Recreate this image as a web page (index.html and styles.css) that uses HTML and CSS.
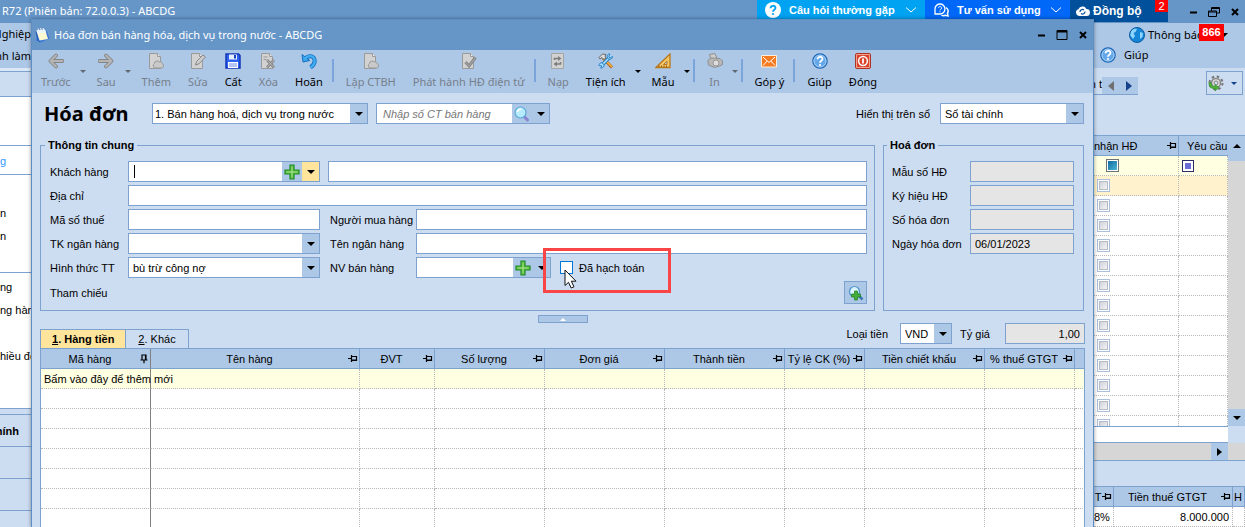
FILE: index.html
```html
<!DOCTYPE html>
<html lang="vi">
<head>
    <meta charset="UTF-8">
    <meta name="viewport" content="width=device-width, initial-scale=1.0">
    <title>Hóa đơn bán hàng hóa, dịch vụ trong nước - ABCDG</title>
    <link rel="stylesheet" href="styles.css">
</head>
<body>
    <!-- Shared icons -->
    <svg class="symbols" aria-hidden="true">
        <symbol id="arrow-left" viewBox="0 0 16 16"><path d="M8 2.500 2.500 8 8 13.500M3 8H14.500" fill="none" stroke="#858585" stroke-width="3.800" stroke-linecap="round" stroke-linejoin="round"/><path d="M8 2.500 2.500 8 8 13.500M3 8H14.500" fill="none" stroke="#b5b5b5" stroke-width="2" stroke-linecap="round" stroke-linejoin="round"/></symbol>
        <symbol id="page" viewBox="0 0 16 16"><path d="M1.500 .5h8l3 3v12h-11z" fill="#d2d2d2" stroke="#9a9a9a"/><path d="M9.500.5v3h3" fill="#eee" stroke="#9a9a9a"/></symbol>
        <symbol id="page-add" viewBox="0 0 16 16"><use href="#page"/><path d="M7 15a2.500 2.500 0 0 1-.5-4.500 2.500 2.500 0 0 1 4.500-1.500 2.500 2.500 0 0 1 3.500 2 2.200 2.200 0 0 1-.5 4z" fill="#c9c9c9" stroke="#999"/></symbol>
        <symbol id="page-edit" viewBox="0 0 16 16"><use href="#page"/><path d="m5.500 12 1-3.500L13 2l2.500 2L9 10.800z" fill="#ccc" stroke="#888"/></symbol>
        <symbol id="page-delete" viewBox="0 0 16 16"><use href="#page"/><path d="M3.500 4h4M3.500 6.500h3" stroke="#999"/><path d="m7 7 7 7.500m0-7.500-7 7.500" stroke="#858585" stroke-width="2.600"/><path d="m7 7 7 7.500m0-7.500-7 7.500" stroke="#bbb"/></symbol>
        <symbol id="page-check" viewBox="0 0 16 16"><use href="#page"/><path d="m4.500 9 3.500 4 6.500-8.500" fill="none" stroke="#888" stroke-width="3"/><path d="m4.500 9 3.500 4 6.500-8.500" fill="none" stroke="#aaa"/></symbol>
        <symbol id="save" viewBox="0 0 16 16"><path d="M1 1h12.500L15 2.500V15H1z" fill="#2e63ef" stroke="#1338b8" stroke-width="1.500"/><path d="M4 1.500h8v5H4z" fill="#e8efff"/><path d="M9 2h2v3.500H9z" fill="#1b43c8"/><path d="M3 9h10v6H3z" fill="#fff"/><path d="M4 11h8m-8 2h8" stroke="#6b8be8"/></symbol>
        <symbol id="undo" viewBox="0 0 16 16"><path d="M3.500 6.500C6 2.500 11.500 2 13.200 5.700 14.500 9 13 12 9.500 14.500" fill="none" stroke="#1672c4" stroke-width="4"/><path d="M1 1.500 2 9l6.800-1.500z" fill="#3aa4ee" stroke="#1672c4"/><path d="M3.500 6.500C6 2.500 11.500 2 13.200 5.700 14.500 9 13 12 9.500 14.500" fill="none" stroke="#43aef2" stroke-width="2.200"/></symbol>
        <symbol id="reload" viewBox="0 0 16 16"><path d="M1.500.5h12v15h-12z" fill="#d2d2d2" stroke="#a5a5a5"/><path d="M4.500 7V5.500h4M10.500 9v2H6.500" fill="none" stroke="#7d7d7d" stroke-width="1.600"/><path d="M8 3v5L11.500 5.500zM7 8.500v5L3.500 11z" fill="#7d7d7d"/></symbol>
        <symbol id="tools" viewBox="0 0 16 16"><path d="m5 5 9 9.500" stroke="#a5641b" stroke-width="3"/><path d="m6 6 8 8" stroke="#ffb43c" stroke-width="1.500"/><path d="M1 4.500 4.500 1l3.500.5-1 1.500 1 2-2 1.500-2-2L2 6z" fill="#ddd" stroke="#666"/><path d="m3 13 9-9" stroke="#2480c6" stroke-width="3.200"/><path d="m2 14 11-11" stroke="#b4e3ff" stroke-width="1.500"/><path d="M14.500 3.500 12 5l-1.300-1.500L12 1C9.500.7 8.500 3 9.500 5.200c2 1.800 5.500.8 5-1.700z" fill="#a8dcff" stroke="#2480c6"/><path d="M1 12.500C1 9.700 4 9 5.500 11c1.500 2-.5 4.500-3 4l1.500-2z" fill="#a8dcff" stroke="#2480c6"/></symbol>
        <symbol id="ruler" viewBox="0 0 16 16"><path d="M15 1v13.500H1z" fill="#f5c667" stroke="#b97818" stroke-width="1.300"/><path d="M12 8v3.500H8.500z" fill="#adc7e6" stroke="#b97818"/><path d="M4 14v-1.500m2.500 1.500v-1.500m2.500 1.500v-1.500m2.500 1.500v-1.500" stroke="#8d5710"/></symbol>
        <symbol id="printer" viewBox="0 0 16 16"><path d="M2.500 1.500 8 .5l2 5-6 2z" fill="#ccc" stroke="#8f8f8f"/><path d="M.8 7.500 4 5l9 .5 2.500 2.500v3.500l-3 1.500-5 1.500-6-2.500z" fill="#b7b7b7" stroke="#8f8f8f"/><circle cx="9" cy="10" r="3" fill="#ddd" stroke="#999"/></symbol>
        <symbol id="mail" viewBox="0 0 16 16"><path d="M.5 2.500h15v11.500H.5z" fill="#f47b20" stroke="#fff0dc"/><path d="m2 4 6 5.500L14 4M2 12.500l4.200-4.500M14 12.500 9.800 8" fill="none" stroke="#fff"/></symbol>
        <symbol id="help" viewBox="0 0 16 16"><circle cx="8" cy="8" r="7.200" fill="#65a8ea" stroke="#1d65b4" stroke-width="1.200"/><circle cx="8" cy="8" r="6" fill="none" stroke="#a8d0f6"/><path d="M5.500 6.300c.1-3.400 5-3.200 5-.4C10.500 7.800 8 7.700 8 9.700" fill="none" stroke="#fff" stroke-width="1.800"/><circle cx="8" cy="12" r="1.100" fill="#fff"/></symbol>
        <symbol id="power" viewBox="0 0 16 16"><rect x=".6" y=".6" width="14.800" height="14.800" rx="1" fill="#d9452a" stroke="#a92a18"/><path d="M1.500 1.500h13v13h-13z" fill="none" stroke="#f3a28f"/><circle cx="8" cy="8" r="4.400" fill="none" stroke="#fff" stroke-width="1.500"/><path d="M8 5.500v5" stroke="#fff" stroke-width="1.800"/></symbol>
        <symbol id="plus" viewBox="0 0 16 16"><path d="M6 1h4v5h5v4h-5v5H6v-5H1V6h5z" fill="#5cbd3c" stroke="#218a2a" stroke-width="1.200"/><path d="M8 2.500v11M2.500 8h11" stroke="#a8e58c"/></symbol>
        <symbol id="magnifier" viewBox="0 0 16 16"><path d="m10.500 11 3 3" stroke="#8a83cf" stroke-width="3" stroke-linecap="round"/><circle cx="6.500" cy="6.500" r="5.500" fill="#b5ebfc" stroke="#5aa7d8" stroke-width="1.200"/><path d="M3.500 6c.3-2 2-3 3.800-2.800" fill="none" stroke="#fff" stroke-width="1.500"/></symbol>
        <symbol id="pin" viewBox="0 0 10 9"><path d="M0 4.500h3M3.500 1v7M3.500 2.500h5v4h-5M4 6h5" fill="none" stroke="#000" stroke-width="1.200"/></symbol>
        <symbol id="chevron" viewBox="0 0 12 6"><path d="m1 .5 5 4.500 5-4.500" fill="none" stroke="#fff"/></symbol>
    </svg>

    <div class="app">
        <header class="app-title">
            <span class="app-name">R72 (Phiên bản: 72.0.0.3) - ABCDG</span>
            <nav class="services">
                <button type="button" class="service faq">
                    <svg width="16" height="16" viewBox="0 0 16 16"><circle cx="8" cy="8" r="8" fill="#fff"/><path d="M5.500 6.300c.1-3.400 5-3.200 5-.4C10.500 7.800 8 7.700 8 9.700" fill="none" stroke="#00a2f2" stroke-width="1.800"/><circle cx="8" cy="12" r="1.100" fill="#00a2f2"/></svg>
                    <span>Câu hỏi thường gặp</span>
                    <svg width="12" height="6"><use href="#chevron"/></svg>
                </button>
                <button type="button" class="service advice">
                    <svg width="16" height="14" viewBox="0 0 16 14"><path d="M2 11V6.500a5 5 0 1 1 5 4.500z" fill="none" stroke="#fff" stroke-width="1.300"/><path d="M5.500 5c0-2 3.200-2 3.200 0C8.700 6.200 7 6.200 7 7.300M7 8.300v1" fill="none" stroke="#fff"/><path d="M13 4.500c3 2 2.200 4.500 1.500 5.500l.5 3-2.500-.7c-1.500.6-3 .5-4-.3" fill="none" stroke="#fff" stroke-width="1.500"/></svg>
                    <span>Tư vấn sử dụng</span>
                    <svg width="12" height="6"><use href="#chevron"/></svg>
                </button>
                <button type="button" class="service sync">
                    <svg width="15" height="12" viewBox="0 0 15 12"><path d="M4 11a3.500 3.500 0 0 1-.6-6.800 4.300 4.300 0 0 1 8-.2A3.500 3.500 0 0 1 11.500 11z" fill="#fff"/><path d="M5 7a2.500 2.500 0 0 1 4-2M10 6.500a2.500 2.500 0 0 1-4 2" fill="none" stroke="#00509b" stroke-width="1.200"/></svg>
                    <span>Đồng bộ</span>
                    <span class="badge sync-badge">2</span>
                </button>
            </nav>
            <div class="window-buttons">
                <button type="button" aria-label="Thu nhỏ"><svg width="12" height="12" viewBox="0 0 12 12"><path d="M3 6.500h7" stroke="#000" stroke-width="2"/></svg></button>
                <button type="button" aria-label="Khôi phục"><svg width="12" height="12" viewBox="0 0 12 12"><path d="M3.500 5V1.500h8V7H8.500M.5 5h8v5.500h-8zM.5 6h8M3.500 2.500h8" fill="none" stroke="#000"/></svg></button>
                <button type="button" aria-label="Đóng"><svg width="12" height="12" viewBox="0 0 12 12"><path d="m3 3 6 6m0-6-6 6" stroke="#000" stroke-width="2"/></svg></button>
            </div>
        </header>

        <div class="menubar">
            <div class="menu-left">
                <span>Nghiệp</span>
                <span>nh làm</span>
            </div>
            <div class="menu-right">
                <div class="notice">
                    <svg width="16" height="16" viewBox="0 0 16 16"><circle cx="8" cy="8" r="7.500" fill="#1484d6"/><path d="M2.500 3.500C5 1 7.500 1 8 2L6.500 5 4.500 6 6 9l-2 3-3-4zM11 5l3 1-.5 4-2.500 2z" fill="#8bd5ff"/><circle cx="8" cy="8" r="7.500" fill="none" stroke="#0c5da5"/></svg>
                    <span>Thông báo</span>
                    <i class="triangle"></i>
                    <span class="badge notice-badge">866</span>
                </div>
                <div class="help-link">
                    <svg width="16" height="16"><use href="#help"/></svg>
                    <span>Giúp</span>
                </div>
            </div>
        </div>

        <div class="workspace">
            <aside class="side">
                <div class="side-strip"></div>
                <div class="side-block side-top"></div>
                <div class="side-block side-active"><span>g</span></div>
                <div class="side-block side-group"><span>n</span><span>n</span></div>
                <div class="side-block side-list"><span>ng</span><span>ng hàng</span><span></span><span>hiều đối</span></div>
                <div class="side-gap"></div>
                <div class="side-nav side-nav-active">chính</div>
                <div class="side-nav"></div>
                <div class="side-nav"></div>
                <div class="side-nav"></div>
            </aside>

            <section class="listing">
                <div class="listing-tabs">
                    <div class="tab-scroll">
                        <span>n t</span>
                        <button type="button" aria-label="Trước"><svg width="6" height="10"><path d="M6 0v10L0 5z" fill="#707070"/></svg></button>
                        <button type="button" aria-label="Sau"><svg width="6" height="10"><path d="M0 0v10l6-5z" fill="#15428b"/></svg></button>
                    </div>
                    <button type="button" class="settings" aria-label="Tùy chọn">
                        <svg width="16" height="16" viewBox="0 0 16 16"><circle cx="8" cy="8" r="6.500" fill="none" stroke="#777" stroke-width="2" stroke-dasharray="2.500 2.600"/><circle cx="8" cy="8" r="4.500" fill="#ddd" stroke="#888" stroke-width="1.500"/><circle cx="8" cy="8" r="2" fill="#cbdbf0" stroke="#888"/><path d="M1 7.500c-.5 4 2.500 6.500 6 6V16l4-3.500-4-3v2c-2.500 0-4-1.500-4-4z" fill="#4cb23b" stroke="#2d8a24" stroke-width=".6"/></svg>
                        <i class="triangle blue"></i>
                    </button>
                </div>

                <div class="list-grid">
                    <div class="list-body">
                        <table class="grid">
                            <thead>
                                <tr>
                                    <th class="col-confirm"><div class="head"><span>nhận HĐ</span><svg width="10" height="9"><use href="#pin"/></svg></div></th>
                                    <th class="col-request"><div class="head"><span>Yêu cầu</span></div></th>
                                </tr>
                            </thead>
                            <tbody>
                                <tr class="row-filter"><td><i class="mark teal"></i></td><td><i class="mark violet"></i></td></tr>
                                <tr class="row-current"><td><input type="checkbox" class="tick" aria-label="Dòng 1"></td><td></td></tr>
                                <tr><td><input type="checkbox" class="tick" aria-label="Dòng 2"></td><td></td></tr>
                                <tr><td><input type="checkbox" class="tick" aria-label="Dòng 3"></td><td></td></tr>
                                <tr><td><input type="checkbox" class="tick" aria-label="Dòng 4"></td><td></td></tr>
                                <tr><td><input type="checkbox" class="tick" aria-label="Dòng 5"></td><td></td></tr>
                                <tr><td><input type="checkbox" class="tick" aria-label="Dòng 6"></td><td></td></tr>
                                <tr><td><input type="checkbox" class="tick" aria-label="Dòng 7"></td><td></td></tr>
                                <tr><td><input type="checkbox" class="tick" aria-label="Dòng 8"></td><td></td></tr>
                                <tr><td><input type="checkbox" class="tick" aria-label="Dòng 9"></td><td></td></tr>
                                <tr><td><input type="checkbox" class="tick" aria-label="Dòng 10"></td><td></td></tr>
                                <tr><td><input type="checkbox" class="tick" aria-label="Dòng 11"></td><td></td></tr>
                                <tr><td><input type="checkbox" class="tick" aria-label="Dòng 12"></td><td></td></tr>
                                <tr><td><input type="checkbox" class="tick" aria-label="Dòng 13"></td><td></td></tr>
                            </tbody>
                        </table>
                    </div>
                    <div class="scroll-y">
                        <button type="button" class="scroll-up" aria-label="Cuộn lên"><i class="triangle up"></i></button>
                        <button type="button" class="scroll-down" aria-label="Cuộn xuống"><i class="triangle"></i></button>
                    </div>
                </div>
                <div class="list-foot"></div>
                <div class="scroll-x">
                    <button type="button" aria-label="Cuộn phải"><svg width="5" height="8"><path d="M0 0v8l5-4z"/></svg></button>
                </div>

                <table class="grid detail-grid">
                    <thead>
                        <tr>
                            <th class="col-rate"><div class="head"><span>T</span><svg width="10" height="9"><use href="#pin"/></svg></div></th>
                            <th><div class="head"><span>Tiền thuế GTGT</span><svg width="10" height="9"><use href="#pin"/></svg></div></th>
                            <th class="col-next"><div class="head"><span>H</span></div></th>
                        </tr>
                    </thead>
                    <tbody>
                        <tr><td>8%</td><td class="number">8.000.000</td><td></td></tr>
                    </tbody>
                </table>
            </section>
        </div>
    </div>

    <div class="dialog" role="dialog" aria-labelledby="dialogTitle">
        <header class="dialog-title">
            <svg width="15" height="15" viewBox="0 0 15 15"><path d="m3 3 8-1.500 3.500 9-9 4-4.500-2z" fill="#3a78d8"/><path d="m1.500 2.500 8.500-1 3 9.500-8.500 1.500z" fill="#fff9d0"/><path d="m1.500 2.500 8.500-1 1 3-8.500 1.200z" fill="#e9f6ff"/><path d="M1 3.500 3 12l2 2" fill="none" stroke="#2455b5"/><path d="M3 .5 4 3m1.500-3 1 3M8 0l1 2.500" stroke="#f4f4f4"/></svg>
            <span id="dialogTitle">Hóa đơn bán hàng hóa, dịch vụ trong nước - ABCDG</span>
            <div class="window-buttons">
                <button type="button" aria-label="Thu nhỏ"><svg width="12" height="12" viewBox="0 0 12 12"><path d="M3 6.500h7" stroke="#000" stroke-width="2"/></svg></button>
                <button type="button" aria-label="Phóng to"><svg width="12" height="12" viewBox="0 0 12 12"><path d="M1 1.500h10v9H1z" fill="none" stroke="#000"/><path d="M1 2.500h10" stroke="#000" stroke-width="2"/></svg></button>
                <button type="button" aria-label="Đóng"><svg width="12" height="12" viewBox="0 0 12 12"><path d="m3 3 6 6m0-6-6 6" stroke="#000" stroke-width="2"/></svg></button>
            </div>
        </header>

        <div class="toolbar">
            <button type="button" class="tool" disabled><svg width="16" height="16"><use href="#arrow-left"/></svg>Trước</button>
            <i class="triangle tool-drop off"></i>
            <button type="button" class="tool" disabled><svg class="flip" width="16" height="16"><use href="#arrow-left"/></svg>Sau</button>
            <i class="triangle tool-drop off"></i>
            <button type="button" class="tool" disabled><svg width="16" height="16"><use href="#page-add"/></svg>Thêm</button>
            <button type="button" class="tool" disabled><svg width="16" height="16"><use href="#page-edit"/></svg>Sửa</button>
            <button type="button" class="tool"><svg width="16" height="16"><use href="#save"/></svg>Cất</button>
            <button type="button" class="tool" disabled><svg width="16" height="16"><use href="#page-delete"/></svg>Xóa</button>
            <button type="button" class="tool"><svg width="16" height="16"><use href="#undo"/></svg>Hoãn</button>
            <i class="divider"></i>
            <button type="button" class="tool" disabled><svg width="16" height="16"><use href="#page-add"/></svg>Lập CTBH</button>
            <button type="button" class="tool" disabled><svg width="16" height="16"><use href="#page-check"/></svg>Phát hành HĐ điện tử</button>
            <i class="divider"></i>
            <button type="button" class="tool" disabled><svg width="16" height="16"><use href="#reload"/></svg>Nạp</button>
            <button type="button" class="tool"><svg width="16" height="16"><use href="#tools"/></svg>Tiện ích</button>
            <i class="triangle tool-drop"></i>
            <button type="button" class="tool"><svg width="16" height="16"><use href="#ruler"/></svg>Mẫu</button>
            <i class="triangle tool-drop"></i>
            <i class="divider"></i>
            <button type="button" class="tool" disabled><svg width="16" height="16"><use href="#printer"/></svg>In</button>
            <i class="triangle tool-drop off"></i>
            <i class="divider"></i>
            <button type="button" class="tool"><svg width="16" height="16"><use href="#mail"/></svg>Góp ý</button>
            <i class="divider"></i>
            <button type="button" class="tool"><svg width="16" height="16"><use href="#help"/></svg>Giúp</button>
            <button type="button" class="tool"><svg width="16" height="16"><use href="#power"/></svg>Đóng</button>
        </div>

        <form class="invoice">
            <div class="invoice-top">
                <h1>Hóa đơn</h1>
                <div class="combo combo-type">
                    <select aria-label="Loại hóa đơn"><option>1. Bán hàng hoá, dịch vụ trong nước</option></select>
                    <span class="drop"><i class="triangle"></i></span>
                </div>
                <div class="combo combo-search">
                    <input type="text" placeholder="Nhập số CT bán hàng" aria-label="Số chứng từ bán hàng">
                    <button type="button" class="combo-button" aria-label="Tìm"><svg width="16" height="16"><use href="#magnifier"/></svg></button>
                    <span class="drop"><i class="triangle"></i></span>
                </div>
                <label for="ledger" class="ledger-label">Hiển thị trên sổ</label>
                <div class="combo combo-ledger">
                    <select id="ledger"><option>Sổ tài chính</option></select>
                    <span class="drop"><i class="triangle"></i></span>
                </div>
            </div>

            <div class="groups">
                <fieldset class="group general">
                    <legend>Thông tin chung</legend>
                    <div class="general-fields">
                        <label for="customer">Khách hàng</label>
                        <div class="combo">
                            <input type="text" id="customer">
                            <span class="caret"></span>
                            <button type="button" class="combo-button" aria-label="Thêm khách hàng"><svg width="16" height="16"><use href="#plus"/></svg></button>
                            <span class="drop hot"><i class="triangle"></i></span>
                        </div>
                        <input type="text" class="customer-name" aria-label="Tên khách hàng">

                        <label for="address">Địa chỉ</label>
                        <input type="text" id="address" class="wide">

                        <label for="taxCode">Mã số thuế</label>
                        <input type="text" id="taxCode">
                        <label for="buyer" class="second">Người mua hàng</label>
                        <input type="text" id="buyer">

                        <label for="bankAccount">TK ngân hàng</label>
                        <div class="combo">
                            <select id="bankAccount"><option></option></select>
                            <span class="drop"><i class="triangle"></i></span>
                        </div>
                        <label for="bankName" class="second">Tên ngân hàng</label>
                        <input type="text" id="bankName">

                        <label for="payment">Hình thức TT</label>
                        <div class="combo">
                            <select id="payment"><option>bù trừ công nợ</option></select>
                            <span class="drop"><i class="triangle"></i></span>
                        </div>
                        <label for="seller" class="second">NV bán hàng</label>
                        <div class="seller-row">
                            <div class="combo combo-seller">
                                <input type="text" id="seller">
                                <button type="button" class="combo-button" aria-label="Thêm nhân viên"><svg width="16" height="16"><use href="#plus"/></svg></button>
                                <span class="drop"><i class="triangle"></i></span>
                            </div>
                            <div class="posted">
                                <input type="checkbox" id="posted">
                                <label for="posted">Đã hạch toán</label>
                                <span class="highlight"></span>
                                <svg class="pointer" width="14" height="20" viewBox="0 0 14 20"><path d="M1 1v15.500l3.500-3.200 2.700 5.700 2.800-1.200-2.700-5.600H12z" fill="#fff" stroke="#111"/></svg>
                            </div>
                        </div>
                    </div>
                    <div class="reference">
                        <span>Tham chiếu</span>
                        <button type="button" aria-label="Chọn chứng từ tham chiếu"><svg width="16" height="16" viewBox="0 0 16 16"><path d="m10 10 4.500 4.500" stroke="#3975b0" stroke-width="2.500"/><circle cx="6.500" cy="6.500" r="5" fill="#d9f4ff" stroke="#4b91c8" stroke-width="1.200"/><path d="M6.500 6h3v3h3v3h-3v3h-3v-3h-3V9h3z" fill="#43ae3a" stroke="#207b20" stroke-width=".7"/></svg></button>
                    </div>
                </fieldset>

                <fieldset class="group document">
                    <legend>Hoá đơn</legend>
                    <div class="document-fields">
                        <label for="template">Mẫu số HĐ</label>
                        <input type="text" id="template" readonly>
                        <label for="serial">Ký hiệu HĐ</label>
                        <input type="text" id="serial" readonly>
                        <label for="number">Số hóa đơn</label>
                        <input type="text" id="number" readonly>
                        <label for="date">Ngày hóa đơn</label>
                        <input type="text" id="date" value="06/01/2023" readonly>
                    </div>
                </fieldset>
            </div>

            <button type="button" class="collapse" aria-label="Thu gọn"><i class="triangle up white"></i></button>

            <div class="tab-row">
                <div class="tabs">
                    <button type="button" class="tab active"><u>1</u>. Hàng tiền</button>
                    <button type="button" class="tab"><u>2</u>. Khác</button>
                </div>
                <div class="currency">
                    <label for="currency">Loại tiền</label>
                    <div class="combo combo-currency">
                        <select id="currency"><option>VND</option></select>
                        <span class="drop"><i class="triangle"></i></span>
                    </div>
                    <label for="rate">Tỷ giá</label>
                    <input type="text" id="rate" value="1,00" readonly>
                </div>
            </div>

            <table class="grid items">
                <colgroup>
                    <col class="w-code"><col><col class="w-unit"><col class="w-qty"><col class="w-money"><col class="w-money"><col class="w-ratio"><col class="w-money"><col class="w-vat"><col class="w-rest">
                </colgroup>
                <thead>
                    <tr>
                        <th><div class="head"><span>Mã hàng</span><svg class="down" width="10" height="9"><use href="#pin"/></svg></div></th>
                        <th><div class="head"><span>Tên hàng</span><svg width="10" height="9"><use href="#pin"/></svg></div></th>
                        <th><div class="head"><span>ĐVT</span><svg width="10" height="9"><use href="#pin"/></svg></div></th>
                        <th><div class="head"><span>Số lượng</span><svg width="10" height="9"><use href="#pin"/></svg></div></th>
                        <th><div class="head"><span>Đơn giá</span><svg width="10" height="9"><use href="#pin"/></svg></div></th>
                        <th><div class="head"><span>Thành tiền</span><svg width="10" height="9"><use href="#pin"/></svg></div></th>
                        <th><div class="head"><span>Tỷ lệ CK (%)</span><svg width="10" height="9"><use href="#pin"/></svg></div></th>
                        <th><div class="head"><span>Tiền chiết khấu</span><svg width="10" height="9"><use href="#pin"/></svg></div></th>
                        <th><div class="head"><span>% thuế GTGT</span><svg width="10" height="9"><use href="#pin"/></svg></div></th>
                        <th></th>
                    </tr>
                </thead>
                <tbody>
                    <tr class="row-filter"><td>Bấm vào đây để thêm mới</td><td></td><td></td><td></td><td></td><td></td><td></td><td></td><td></td><td></td></tr>
                    <tr><td></td><td></td><td></td><td></td><td></td><td></td><td></td><td></td><td></td><td></td></tr>
                    <tr><td></td><td></td><td></td><td></td><td></td><td></td><td></td><td></td><td></td><td></td></tr>
                    <tr><td></td><td></td><td></td><td></td><td></td><td></td><td></td><td></td><td></td><td></td></tr>
                    <tr><td></td><td></td><td></td><td></td><td></td><td></td><td></td><td></td><td></td><td></td></tr>
                    <tr><td></td><td></td><td></td><td></td><td></td><td></td><td></td><td></td><td></td><td></td></tr>
                    <tr><td></td><td></td><td></td><td></td><td></td><td></td><td></td><td></td><td></td><td></td></tr>
                    <tr><td></td><td></td><td></td><td></td><td></td><td></td><td></td><td></td><td></td><td></td></tr>
                </tbody>
            </table>
        </form>
    </div>
</body>
</html>
```
FILE: styles.css
```css
* {
    margin: 0;
    padding: 0;
    box-sizing: border-box;
}

:root {
    --title: #6696c8;
    --bar: #adc7e6;
    --panel: #ccdcf1;
    --line: #7da2cf;
    --dots: #b8b8b8;
    --ui: "Noto Sans", "Open Sans", sans-serif;
}

body {
    height: 100vh;
    overflow: hidden;
    position: relative;
    background: var(--panel);
    color: #000;
    font: 11px/14px "Liberation Sans", Arial, sans-serif;
}

svg {
    display: block;
    flex: none;
}

.symbols {
    position: absolute;
    width: 0;
    height: 0;
}

button, input, select {
    font: inherit;
    color: inherit;
    border: none;
    border-radius: 0;
    background: none;
    outline: none;
}

.triangle {
    flex: none;
    width: 0;
    height: 0;
    border: 4px solid transparent;
    border-top-color: #000;
    border-bottom: none;
}

.triangle.up {
    border-top: none;
    border-bottom: 4px solid #000;
}

.triangle.white {
    border-bottom-color: #fff;
    border-width: 0 3px 3px;
}

.triangle.blue {
    border-top-color: #15428b;
    border-width: 3px 3px 0;
}

.badge {
    position: absolute;
    background: #f00;
    color: #fff;
    text-align: center;
}

/* Main window behind the dialog */
.app {
    height: 100%;
    display: flex;
    flex-direction: column;
}

.app-title {
    height: 23px;
    display: flex;
    background: var(--title);
    flex: none;
}

.app-name {
    flex: 1;
    padding: 4px 2px;
    font-family: var(--ui);
    color: #fff;
}

.services {
    display: flex;
    align-items: flex-start;
}

.service {
    height: 19px;
    display: flex;
    align-items: center;
    gap: 8px;
    padding: 0 8px;
    color: #fff;
    font-weight: bold;
    white-space: nowrap;
    position: relative;
}

.service span {
    flex: 1;
    text-align: left;
}

.faq {
    width: 168px;
    background: #00a2f2;
}

.advice {
    width: 145px;
    background: #0068f8;
}

.sync {
    width: 98px;
    height: 22px;
    gap: 3px;
    padding: 0 5px;
    background: #00509b;
    font-size: 12px;
}

.service .sync-badge {
    top: 0;
    right: 0;
    width: 13px;
    height: 12px;
    line-height: 12px;
    font-size: 11px;
    font-weight: normal;
    text-align: center;
}

.window-buttons {
    display: flex;
    align-items: center;
    gap: 9px;
    padding-right: 4px;
    margin-left: auto;
}

.app-title .window-buttons {
    margin-left: 19px;
}

.menubar {
    height: 45px;
    flex: none;
    display: flex;
    justify-content: space-between;
    background: var(--bar);
    font-family: var(--ui);
}

.menu-left {
    width: 31px;
    display: flex;
    flex-direction: column;
    align-items: flex-end;
    padding-top: 4px;
    gap: 8px;
    overflow: hidden;
    white-space: nowrap;
}

.menu-right {
    width: 151px;
    padding: 4px 0 0 6px;
    display: flex;
    flex-direction: column;
    gap: 4px;
}

.notice, .help-link {
    display: flex;
    align-items: center;
    gap: 3px;
    position: relative;
}

.notice {
    padding: 0 17px 0 29px;
}

.notice .triangle {
    margin-left: auto;
}

.help-link {
    gap: 8px;
}

.notice-badge {
    right: 21px;
    top: -3px;
    width: 25px;
    line-height: 17px;
    font-family: "Liberation Sans", Arial, sans-serif;
    font-weight: bold;
}

.workspace {
    flex: 1;
    min-height: 0;
    display: flex;
    justify-content: space-between;
}

.side {
    width: 31px;
    overflow: hidden;
    white-space: nowrap;
}

.side-strip {
    height: 28px;
    border-top: 3px solid #dce8f7;
    box-shadow: inset 0 1px var(--line);
}

.side-block {
    background: #fff;
    border-top: 1px solid var(--line);
    display: flex;
    flex-direction: column;
}

.side-top {
    height: 49px;
}

.side-active {
    height: 29px;
    padding-top: 8px;
    color: #3399ff;
}

.side-group {
    height: 98px;
    padding-top: 31px;
    gap: 9px;
}

.side-list {
    height: 136px;
    padding-top: 7px;
    gap: 9px;
}

.side-list span {
    height: 14px;
}

.side-gap {
    height: 6px;
    border-top: 1px solid var(--line);
}

.side-nav {
    height: 32px;
    border-top: 1px solid var(--line);
    line-height: 32px;
    font-weight: bold;
}

.side-nav-active {
    display: flex;
    justify-content: flex-end;
    padding-right: 12px;
}

.listing {
    width: 151px;
    display: flex;
    flex-direction: column;
}

.listing-tabs {
    height: 67px;
    flex: none;
    display: flex;
    justify-content: space-between;
    align-items: flex-start;
    padding: 3px 2px 0 0;
}

.tab-scroll {
    display: flex;
    height: 18px;
    margin-top: 6px;
    border-bottom: 1px solid var(--line);
}

.tab-scroll span {
    width: 8px;
    display: flex;
    justify-content: flex-end;
    overflow: hidden;
    white-space: nowrap;
}

.tab-scroll button {
    display: flex;
    align-items: center;
    padding: 0 6px;
    background: var(--bar);
}

.settings {
    display: flex;
    align-items: center;
    gap: 7px;
    width: 37px;
    height: 24px;
    padding-left: 1px;
    border: 1px solid var(--line);
}

.list-grid {
    display: flex;
    height: 291px;
    flex: none;
    border-top: 1px solid var(--line);
}

.list-body {
    flex: 1;
    overflow: hidden;
    background: #fff;
}

.scroll-y {
    width: 17px;
    display: flex;
    flex-direction: column;
    justify-content: space-between;
    background: #d6d6d6;
}

.scroll-y button {
    display: flex;
    align-items: center;
    justify-content: center;
    background: var(--bar);
}

.scroll-up {
    height: 25px;
    padding-bottom: 6px;
}

.scroll-down {
    height: 17px;
}

.list-foot {
    height: 17px;
    flex: none;
    margin-right: 17px;
    background: #fff;
    border: solid var(--line);
    border-width: 1px 0;
}

.scroll-x {
    height: 18px;
    flex: none;
    display: flex;
    justify-content: flex-end;
    padding-right: 17px;
    background: #d6d6d6;
    border-bottom: 1px solid var(--line);
}

.scroll-x button {
    width: 17px;
    background: var(--bar);
    display: flex;
    align-items: center;
    justify-content: center;
}

.detail-grid {
    flex: none;
    margin-top: 25px;
}

/* Grids */
.grid {
    width: 100%;
    table-layout: fixed;
    border-spacing: 0;
    background: #fff;
}

.grid th {
    height: 20px;
    padding-right: 1px;
    background: var(--bar);
    border-right: 1px solid var(--line);
    border-bottom: 1px solid var(--line);
    font-weight: normal;
    white-space: nowrap;
}

.grid td {
    height: 20px;
    border-right: 1px dotted var(--dots);
    border-bottom: 1px dotted var(--dots);
    white-space: nowrap;
}

.head {
    display: flex;
    align-items: center;
}

.head span {
    flex: 1;
}

.head .down {
    transform: rotate(-90deg);
}

.row-filter {
    background: #ffffe1;
}

.row-current {
    background: #fff2cc;
}

.col-confirm {
    width: 85px;
}

.col-confirm span {
    text-align: left;
}

.grid .col-request {
    padding-left: 8px;
    border-right: none;
}

.col-rate {
    width: 20px;
}

.col-next {
    width: 12px;
}

.detail-grid th {
    border-top: 1px solid var(--line);
    height: 21px;
}

.detail-grid .number {
    text-align: right;
    padding-right: 3px;
}

.mark {
    display: block;
    width: 13px;
    height: 13px;
    margin-left: 12px;
    border: 1px solid #6d7278;
    background: linear-gradient(135deg, #0b5f96, #4fc0dd);
    box-shadow: inset 0 0 0 1px #fff;
}

.mark.violet {
    width: 12px;
    height: 12px;
    margin-left: 3px;
    border: 1px solid #2b2b6e;
    background: #6c6cd6;
    box-shadow: inset 0 0 0 2px #fff;
}

.tick {
    appearance: none;
    display: block;
    width: 13px;
    height: 13px;
    margin-left: 3px;
    border: 1px solid #a9bfdc;
    background: linear-gradient(135deg, #c3c8cf, #fff);
    box-shadow: inset 0 0 0 1px #fff, inset 0 0 0 2px #b5bcc6;
}

/* Dialog */
.dialog {
    position: absolute;
    top: 19px;
    right: 151px;
    bottom: 0;
    left: 31px;
    overflow: hidden;
    background: var(--panel);
    border: solid #5d8fc4;
    border-width: 1px 1px 0;
    box-shadow: 0 0 4px rgba(0, 0, 0, 0.4);
}

.dialog-title {
    height: 30px;
    display: flex;
    align-items: center;
    gap: 4px;
    padding-left: 3px;
    background: var(--title);
    color: #fff;
    font-family: var(--ui);
}

.toolbar {
    height: 43px;
    display: flex;
    align-items: stretch;
    gap: 1px;
    padding-left: 1px;
    background: var(--bar);
    font: 11px/16px var(--ui);
    overflow: hidden;
}

.tool {
    display: flex;
    flex-direction: column;
    align-items: center;
    gap: 5px;
    padding: 3px 8px 0;
    white-space: nowrap;
}

.tool:disabled {
    color: #76808c;
}

.flip {
    transform: scaleX(-1);
}

.tool-drop {
    align-self: center;
    border-width: 3px 3px 0;
    margin-right: 2px;
}

.tool-drop.off {
    border-top-color: #606870;
}

.divider {
    width: 2px;
    margin: 9px 3px 11px 0;
    background: #7ba5da;
}

.invoice {
    padding: 10px 8px 0;
}

.invoice-top {
    display: flex;
    align-items: center;
    height: 21px;
    padding-right: 1px;
}

h1 {
    width: 112px;
    padding-left: 4px;
    font: bold 20px/21px var(--ui);
}

.combo {
    display: flex;
    height: 21px;
    position: relative;
    background: #fff;
    border: 1px solid var(--line);
}

.combo select, .combo input {
    flex: 1;
    width: 0;
    min-width: 0;
    appearance: none;
    padding: 0 4px;
}

.combo input {
    padding-left: 6px;
}

.combo ::placeholder {
    color: #777;
    font-style: italic;
    opacity: 1;
}

.drop {
    width: 17px;
    display: flex;
    align-items: center;
    justify-content: center;
    background: var(--bar);
}

.drop.hot {
    background: #ffe49b;
}

.combo-button {
    width: 20px;
    display: flex;
    align-items: center;
    justify-content: center;
    background: var(--bar);
}

.caret {
    position: absolute;
    left: 5px;
    top: 3px;
    width: 1px;
    height: 13px;
    background: #000;
}

.combo-type {
    width: 216px;
}

.combo-type select {
    padding-left: 2px;
}

.combo-search {
    width: 174px;
    margin-left: 8px;
}

.ledger-label {
    margin-left: auto;
}

.combo-ledger {
    width: 144px;
    margin-left: 10px;
}

.groups {
    display: flex;
    gap: 8px;
    margin-top: 14px;
    padding-right: 1px;
}

.group {
    min-width: 0;
    border: 1px solid var(--line);
    height: 173px;
}

.group legend {
    margin-left: -5px;
    padding: 0 3px;
    font-weight: bold;
}

.general {
    flex: 1;
    padding: 9px 7px 0 9px;
}

.document {
    width: 201px;
    padding: 9px 9px 0 8px;
}

.general-fields {
    display: grid;
    grid-template-columns: 78px 192px 96px 1fr;
    gap: 3px 0;
    align-items: center;
}

.document-fields {
    display: grid;
    grid-template-columns: 78px 1fr;
    gap: 3px 0;
    align-items: center;
}

.general-fields > input, .document-fields > input, #rate {
    width: 100%;
    height: 21px;
    padding: 0 4px;
    background: #fff;
    border: 1px solid var(--line);
}

.general-fields > .customer-name {
    grid-column: 3 / 5;
    justify-self: end;
    width: calc(100% - 8px);
}

.general-fields > .wide {
    grid-column: 2 / 5;
}

.second {
    padding-left: 10px;
}

.document-fields > input[readonly], #rate {
    background: #e5e5e5;
}

.seller-row {
    display: flex;
    align-items: center;
    gap: 9px;
}

.combo-seller {
    width: 135px;
}

.posted {
    display: flex;
    align-items: center;
    gap: 6px;
    position: relative;
}

#posted {
    appearance: none;
    width: 13px;
    height: 13px;
    background: #fff;
    border: 1px solid #0078d7;
}

/* Red frame and pointer over the check box */
.highlight {
    position: absolute;
    top: -13px;
    right: -27px;
    bottom: -18px;
    left: -17px;
    border: 3px solid #f94545;
}

.pointer {
    position: absolute;
    top: 8px;
    left: 4px;
}

.reference {
    display: flex;
    justify-content: space-between;
    align-items: center;
    margin-top: 3px;
}

.reference button {
    width: 23px;
    height: 23px;
    display: flex;
    align-items: center;
    justify-content: center;
    background: var(--bar);
    border: 1px solid var(--line);
}

.collapse {
    display: flex;
    align-items: center;
    justify-content: center;
    width: 50px;
    height: 8px;
    margin: 4px auto 0;
    background: var(--bar);
    border: 1px solid var(--line);
}

.tab-row {
    display: flex;
    justify-content: space-between;
    align-items: flex-start;
    height: 25px;
}

.tabs {
    display: flex;
    align-self: flex-end;
}

.tab {
    height: 19px;
    padding: 0 12px;
    border: 1px solid var(--line);
    border-left: none;
    border-bottom: none;
}

.tab.active {
    padding: 0 11px;
    background: #ffe49b;
    border-left: 1px solid var(--line);
    font-weight: bold;
}

.currency {
    display: flex;
    align-items: center;
}

.combo-currency {
    width: 52px;
    margin: 0 8px 0 12px;
}

#rate {
    width: 80px;
    margin-left: 15px;
    text-align: right;
}

.items {
    border-top: 1px solid var(--line);
    border-left: 1px solid var(--line);
}

.items th:first-child, .items td:first-child {
    border-right: 1px solid #808080;
}

.items td:first-child {
    padding-left: 3px;
}

.items td:last-child {
    border-right: 1px solid var(--line);
}

.w-code {
    width: 110px;
}

.w-unit {
    width: 75px;
}

.w-qty {
    width: 110px;
}

.w-money {
    width: 120px;
}

.w-ratio {
    width: 80px;
}

.w-vat {
    width: 90px;
}

.w-rest {
    width: 10px;
}
```
